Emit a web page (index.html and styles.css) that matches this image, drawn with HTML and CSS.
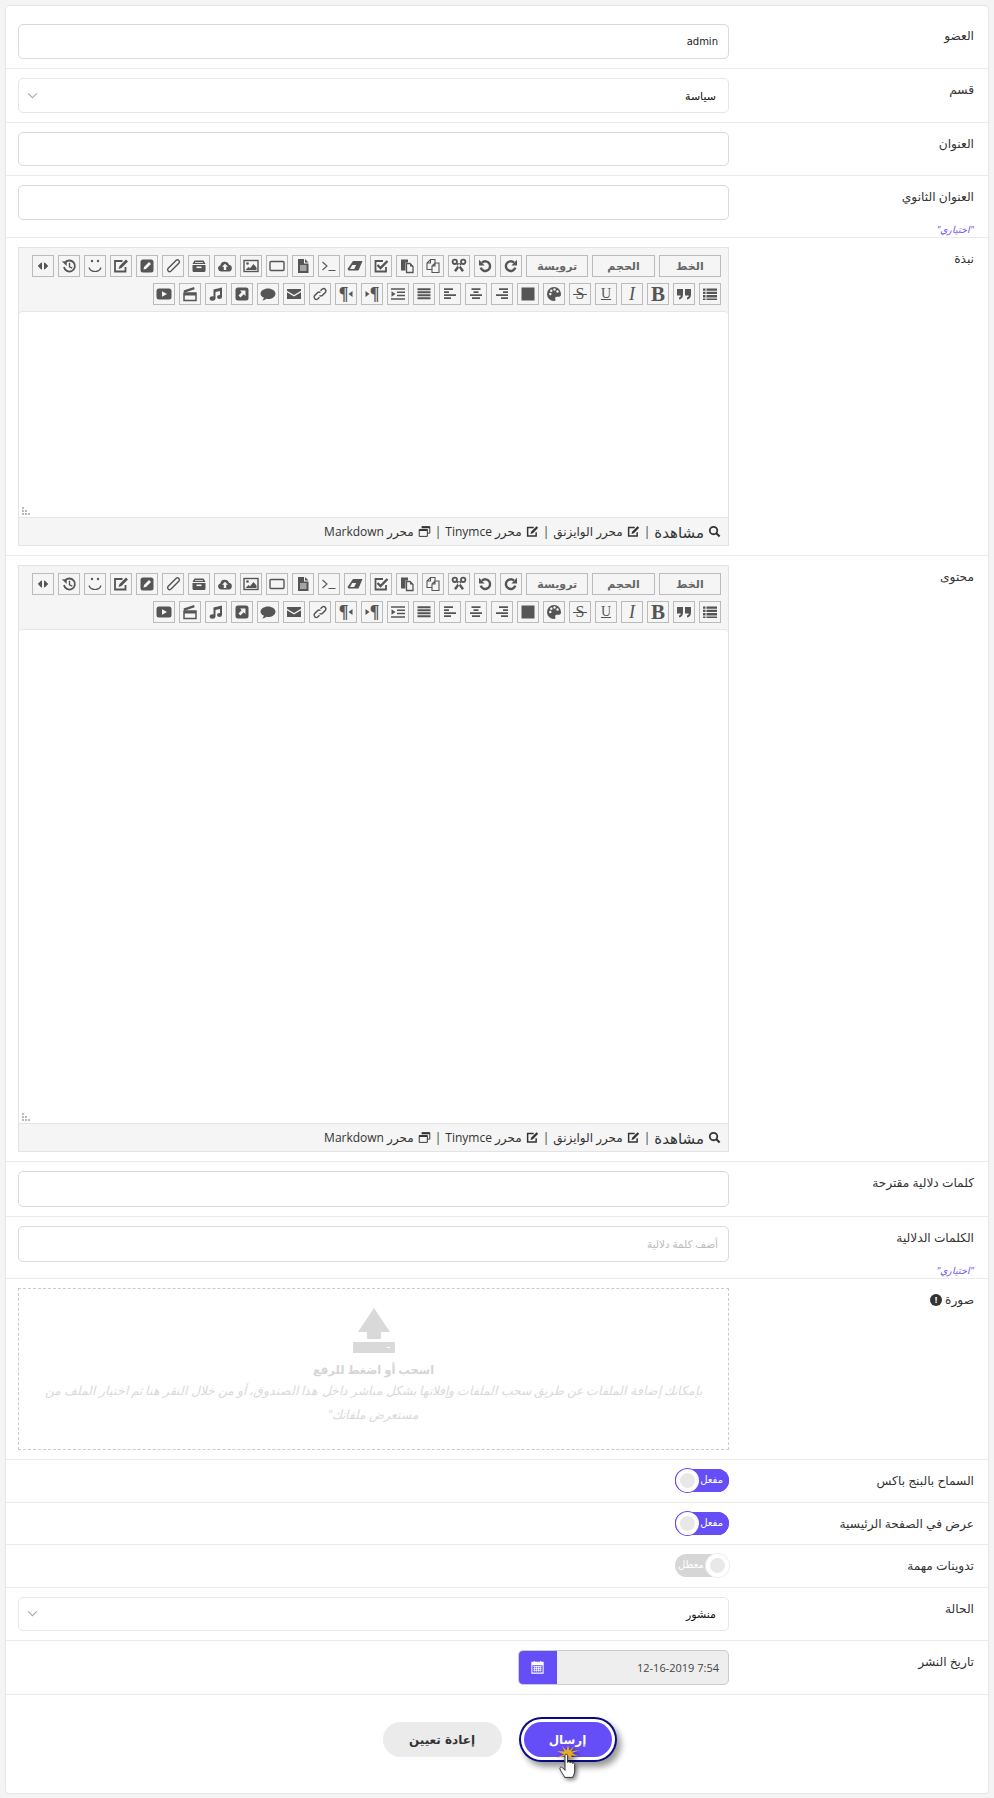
FILE: index.html
```html
<!DOCTYPE html>
<html lang="ar" dir="rtl">
<head>
<meta charset="utf-8">
<title>إضافة تدوينة</title>
<link rel="stylesheet" href="styles.css">
</head>
<body>
<svg class="sprite" width="0" height="0">
  <defs>
    <symbol id="i-redo" viewBox="0 0 16 16"><path d="M12.3 9.600A4.800 4.800 0 1 1 11 4.600" fill="none" stroke="currentColor" stroke-width="2.400"/><path d="M14 1.800v5.600H8.400z"/></symbol>
    <symbol id="i-undo" viewBox="0 0 16 16"><path d="M3.700 9.600A4.800 4.800 0 1 0 5 4.600" fill="none" stroke="currentColor" stroke-width="2.400"/><path d="M2 1.800v5.600h5.600z"/></symbol>
    <symbol id="i-cut" viewBox="0 0 16 16"><circle cx="3.800" cy="3.800" r="2.200" fill="none" stroke="currentColor" stroke-width="1.800"/><circle cx="12.200" cy="3.800" r="2.200" fill="none" stroke="currentColor" stroke-width="1.800"/><path d="M5 5.500l6 8.500 2-1.500L7.500 5zM11 5.500L5 14l-2-1.500L8.500 5z"/></symbol>
    <symbol id="i-copy" viewBox="0 0 16 16"><path d="M10 5V1.500H5.500L2 5v6.500h5M5.500 1.500V5H2M10 5h4v9.500H7V8zM10 5v3H7" fill="none" stroke="currentColor" stroke-width="1.100"/></symbol>
    <symbol id="i-paste" viewBox="0 0 16 16"><path d="M2 1.500h7v3H6.500v8H2z"/><path d="M7.500 5.500h3.500l3 3v6H7.500z" fill="none" stroke="currentColor" stroke-width="1.300"/><path d="M11 5.500v3h3z"/></symbol>
    <symbol id="i-check" viewBox="0 0 16 16"><path d="M13 9v4.500H2.500V3H10" fill="none" stroke="currentColor" stroke-width="1.800"/><path d="M4.500 7l3 3 7-7" fill="none" stroke="currentColor" stroke-width="2.400"/></symbol>
    <symbol id="i-eraser" viewBox="0 0 16 16"><path d="M6 3H15.500l-4 9.500H1.500L.5 11z"/><path d="M3 11l2.200-4h4l-2 4z" fill="#f5f5f5"/></symbol>
    <symbol id="i-terminal" viewBox="0 0 16 16"><path d="M1.500 4l4.500 4-4.500 4M7.500 12.500h7" fill="none" stroke="currentColor" stroke-width="1.100"/></symbol>
    <symbol id="i-file" viewBox="0 0 16 16"><path d="M3 1h6v4.500h4.500V15H3z"/><path d="M10 1l3.500 3.500H10z"/><path d="M5 8h6.500M5 10h6.500M5 12h6.500" stroke="#f5f5f5" stroke-width="1"/></symbol>
    <symbol id="i-rect" viewBox="0 0 16 16"><rect x="1" y="3.500" width="14" height="9" rx="1" fill="none" stroke="currentColor" stroke-width="1.400"/></symbol>
    <symbol id="i-image" viewBox="0 0 16 16"><rect x="1" y="2.500" width="14" height="11" fill="none" stroke="currentColor" stroke-width="1.400"/><circle cx="4.500" cy="5.500" r="1.300"/><path d="M2.500 12l3-3 1.500 1.300 3.500-4.300 3 3.500V12z"/></symbol>
    <symbol id="i-cloud" viewBox="0 0 16 16"><path d="M4 13.500A3 3 0 0 1 3.300 7.600 4.500 4.500 0 0 1 12 6.800a3.400 3.400 0 0 1 0 6.700z"/><path d="M8 5.800l3 3H9.200V12H6.800V8.800H5z" fill="#f5f5f5"/></symbol>
    <symbol id="i-archive" viewBox="0 0 16 16"><path d="M3.500 2.500h9l2 3.500h-13z"/><path d="M1.500 7h13v5.500a1.500 1.500 0 0 1-1.500 1.500H3a1.500 1.500 0 0 1-1.500-1.500z"/><path d="M5.500 8.500h5v1.600h-5z" fill="#f5f5f5"/><path d="M4 4.500h8" stroke="#f5f5f5" stroke-width=".8"/></symbol>
    <symbol id="i-clip" viewBox="0 0 16 16"><path d="M11.500 2L3 10.500a2 2 0 0 0 2.800 2.800L14 5A2 2 0 0 0 11.200 2.200L5 8.500" fill="none" stroke="currentColor" stroke-width="1.400"/></symbol>
    <symbol id="i-pen-square" viewBox="0 0 16 16"><rect x="1.500" y="1.500" width="13" height="13" rx="2.500"/><path d="M10 4l2 2-5 5-2.500.5.500-2.500z" fill="#f5f5f5"/></symbol>
    <symbol id="i-edit-o" viewBox="0 0 16 16"><path d="M12.500 9v4.500H2V3h7.500" fill="none" stroke="currentColor" stroke-width="1.800"/><path d="M13 1.500l2 2-6.500 6.500-3 1 1-3z"/></symbol>
    <symbol id="i-smile" viewBox="0 0 16 16"><circle cx="5" cy="3" r="1.200"/><circle cx="11" cy="3" r="1.200"/><path d="M2 9.500c1 3 3.500 4 6 4s5-1 6-4" fill="none" stroke="currentColor" stroke-width="1.200"/></symbol>
    <symbol id="i-history" viewBox="0 0 16 16"><path d="M3.800 5A5.500 5.500 0 1 1 3 9" fill="none" stroke="currentColor" stroke-width="1.800"/><path d="M.8 3.200l5 .3-.2 4.600z"/><path d="M8.500 4.800v4l2.800 1.400" fill="none" stroke="currentColor" stroke-width="1.400"/></symbol>
    <symbol id="i-code" viewBox="0 0 16 16"><path d="M6.500 4.800L3.300 8l3.200 3.200zM9.500 4.800L12.700 8l-3.200 3.200z" stroke="currentColor" stroke-width="1"/></symbol>
    <symbol id="i-list" viewBox="0 0 16 16"><path d="M1 2.500h2.500v2.300H1zM4.500 2.500H15v2.300H4.500zM1 5.800h2.500v2.300H1zM4.500 5.800H15v2.300H4.500zM1 9.100h2.500v2.300H1zM4.500 9.100H15v2.300H4.500zM1 12.400h2.500v1.600H1zM4.500 12.400H15V14H4.500z"/></symbol>
    <symbol id="i-quote" viewBox="0 0 16 16"><path d="M1 3h6v5.500C7 11.500 5.500 13 3 13.500v-2c1 0 1.700-.8 1.700-2H1zM9 3h6v5.500c0 3-1.500 4.500-4 5v-2c1 0 1.700-.8 1.700-2H9z"/></symbol>
    <symbol id="i-palette" viewBox="0 0 16 16"><path d="M8 1a7 7 0 1 0 0 14c1.300 0 1.800-1 1.300-2-.6-1.200.2-2.300 1.600-2.300H13c1.300 0 2-.9 2-2.200C15 4 12 1 8 1z"/><g fill="#f5f5f5"><circle cx="4.300" cy="8" r="1.200"/><circle cx="5.300" cy="4.800" r="1.200"/><circle cx="8.500" cy="3.500" r="1.200"/><circle cx="11.500" cy="5.500" r="1.200"/></g></symbol>
    <symbol id="i-square" viewBox="0 0 16 16"><rect x="1.500" y="1.500" width="13" height="13"/></symbol>
    <symbol id="i-aright" viewBox="0 0 16 16"><path d="M5 3.200h9M9 6.200h5M2 9.200h12M7 12.200h7" stroke="currentColor" stroke-width="1.700"/></symbol>
    <symbol id="i-acenter" viewBox="0 0 16 16"><path d="M3.500 3.200h9M5.500 6.200h5M2 9.200h12M4 12.200h8" stroke="currentColor" stroke-width="1.700"/></symbol>
    <symbol id="i-aleft" viewBox="0 0 16 16"><path d="M2 3.200h9M2 6.200h5M2 9.200h12M2 12.200h7" stroke="currentColor" stroke-width="1.700"/></symbol>
    <symbol id="i-justify" viewBox="0 0 16 16"><path d="M1.500 3.200h13M1.500 6.200h13M1.500 9.200h13M1.500 12.200h13" stroke="currentColor" stroke-width="1.900"/></symbol>
    <symbol id="i-indent" viewBox="0 0 16 16"><path d="M1 3h14M7 6.300h8M7 9.600h8M1 13h14" stroke="currentColor" stroke-width="1.500"/><path d="M5.500 8L1.500 5.300v5.400z"/></symbol>
    <symbol id="i-pil" viewBox="0 0 5 10"><path d="M4.500 2L.5 5l4 3z"/></symbol>
    <symbol id="i-pir" viewBox="0 0 5 10"><path d="M.5 2l4 3-4 3z"/></symbol>
    <symbol id="i-chain" viewBox="0 0 16 16"><path d="M7.500 9.500a2.400 2.400 0 0 0 3 -.2L13.500 6.200a2.300 2.300 0 0 0-3.200-3.200L8.500 4.800M8.500 6.500a2.400 2.400 0 0 0-3 .2L2.500 9.800a2.300 2.300 0 0 0 3.200 3.200L7.500 11.200" fill="none" stroke="currentColor" stroke-width="1.500"/></symbol>
    <symbol id="i-mail" viewBox="0 0 16 16"><path d="M1 3h14v1.800L8 9 1 4.800z"/><path d="M1 6.300L8 10.500l7-4.200V13H1z"/></symbol>
    <symbol id="i-comment" viewBox="0 0 16 16"><path d="M8 2.500c4 0 7.500 2.300 7.500 5.200S12 13 8 13c-.6 0-1.200 0-1.800-.2-1 1-2.300 1.600-4 1.700 1-.9 1.500-1.800 1.600-2.900C2 10.700.5 9.300.5 7.700.5 4.800 4 2.500 8 2.500z"/></symbol>
    <symbol id="i-extlink" viewBox="0 0 16 16"><rect x="1.500" y="1.500" width="13" height="13" rx="2.500"/><path d="M6 4.500h5.500V10L9.700 8.300 6.500 11.500 4.500 9.500 7.700 6.300z" fill="#f5f5f5"/></symbol>
    <symbol id="i-music" viewBox="0 0 16 16"><path d="M5.500 3.500L14 1.500v9.500h-2V5L7.500 6v6.500h-2z"/><ellipse cx="4.500" cy="12.500" rx="2.800" ry="2.200"/><ellipse cx="11.500" cy="11" rx="2.500" ry="2.100"/></symbol>
    <symbol id="i-clap" viewBox="0 0 16 16"><path d="M2 7h12v7.500H2z" fill="none" stroke="currentColor" stroke-width="1.500"/><path d="M2 9.500h12V7H2z"/><path d="M1.500 4.500L12 1l.7 2.200L2.300 6.800z"/></symbol>
    <symbol id="i-play" viewBox="0 0 16 16"><rect x=".5" y="2.500" width="15" height="11" rx="2.500"/><path d="M6 5.300L11 8l-5 2.700z" fill="#f5f5f5"/></symbol>
    <symbol id="i-search" viewBox="0 0 16 16"><circle cx="6.800" cy="6.800" r="4.600" fill="none" stroke="currentColor" stroke-width="2.200"/><path d="M10.300 10.300l4 4" stroke="currentColor" stroke-width="2.600"/></symbol>
    <symbol id="i-window" viewBox="0 0 16 16"><path d="M4.500 2h10v8H12M1.500 5.500h10v8.500h-10z" fill="none" stroke="currentColor" stroke-width="1.200"/><path d="M4.500 2h10v2h-10zM1.500 5.500h10v2h-10z"/></symbol>
    <symbol id="i-chevron" viewBox="0 0 12 8"><path d="M1 1.500l5 5 5-5" fill="none" stroke="currentColor" stroke-width="1.200"/></symbol>
    <symbol id="i-calendar" viewBox="0 0 16 16"><path d="M2 2.500h12V14H2z" fill="none" stroke="currentColor" stroke-width="1.100"/><path d="M2 2.500h12V5.500H2zM4 1h1.200v2.500H4zM10.800 1H12v2.500h-1.200z"/><path d="M3.500 7h9M3.500 9h9M3.500 11h9M5 6.500v6M7 6.500v6M9 6.500v6M11 6.500v6" stroke="currentColor" stroke-width=".8"/></symbol>
  </defs>
</svg>

<form class="card">
  <div class="row">
    <label class="row-label">العضو</label>
    <div class="row-field"><div class="input admin">admin</div></div>
  </div>
  <div class="row">
    <label class="row-label">قسم</label>
    <div class="row-field">
      <div class="input select"><span>سياسة</span><svg class="chevron"><use href="#i-chevron"/></svg></div>
    </div>
  </div>
  <div class="row">
    <label class="row-label">العنوان</label>
    <div class="row-field"><div class="input"></div></div>
  </div>
  <div class="row row-optional">
    <div class="row-label">
      <label>العنوان الثانوي</label>
      <small class="optional">"اختياري"</small>
    </div>
    <div class="row-field"><div class="input"></div></div>
  </div>

  <div class="row">
    <label class="row-label">نبذة</label>
    <div class="row-field">
      <div class="editor">
        <div class="toolbar">
          <div class="tool-row">
            <button type="button" class="tool tool-wide">الخط</button>
            <button type="button" class="tool tool-wide">الحجم</button>
            <button type="button" class="tool tool-wide">ترويسة</button>
            <button type="button" class="tool"><svg><use href="#i-redo"/></svg></button>
            <button type="button" class="tool"><svg><use href="#i-undo"/></svg></button>
            <button type="button" class="tool"><svg><use href="#i-cut"/></svg></button>
            <button type="button" class="tool"><svg><use href="#i-copy"/></svg></button>
            <button type="button" class="tool"><svg><use href="#i-paste"/></svg></button>
            <button type="button" class="tool"><svg><use href="#i-check"/></svg></button>
            <button type="button" class="tool"><svg><use href="#i-eraser"/></svg></button>
            <button type="button" class="tool"><svg><use href="#i-terminal"/></svg></button>
            <button type="button" class="tool"><svg><use href="#i-file"/></svg></button>
            <button type="button" class="tool"><svg><use href="#i-rect"/></svg></button>
            <button type="button" class="tool"><svg><use href="#i-image"/></svg></button>
            <button type="button" class="tool"><svg><use href="#i-cloud"/></svg></button>
            <button type="button" class="tool"><svg><use href="#i-archive"/></svg></button>
            <button type="button" class="tool"><svg><use href="#i-clip"/></svg></button>
            <button type="button" class="tool"><svg><use href="#i-pen-square"/></svg></button>
            <button type="button" class="tool"><svg><use href="#i-edit-o"/></svg></button>
            <button type="button" class="tool"><svg><use href="#i-smile"/></svg></button>
            <button type="button" class="tool"><svg><use href="#i-history"/></svg></button>
            <button type="button" class="tool"><svg><use href="#i-code"/></svg></button>
          </div>
          <div class="tool-row">
            <button type="button" class="tool"><svg><use href="#i-list"/></svg></button>
            <button type="button" class="tool"><svg><use href="#i-quote"/></svg></button>
            <button type="button" class="tool tool-b">B</button>
            <button type="button" class="tool tool-i">I</button>
            <button type="button" class="tool tool-u">U</button>
            <button type="button" class="tool tool-s">S</button>
            <button type="button" class="tool"><svg><use href="#i-palette"/></svg></button>
            <button type="button" class="tool"><svg><use href="#i-square"/></svg></button>
            <button type="button" class="tool"><svg><use href="#i-aright"/></svg></button>
            <button type="button" class="tool"><svg><use href="#i-acenter"/></svg></button>
            <button type="button" class="tool"><svg><use href="#i-aleft"/></svg></button>
            <button type="button" class="tool"><svg><use href="#i-justify"/></svg></button>
            <button type="button" class="tool"><svg><use href="#i-indent"/></svg></button>
            <button type="button" class="tool tool-p"><span>¶</span><svg><use href="#i-pir"/></svg></button>
            <button type="button" class="tool tool-p"><svg><use href="#i-pil"/></svg><span>¶</span></button>
            <button type="button" class="tool"><svg><use href="#i-chain"/></svg></button>
            <button type="button" class="tool"><svg><use href="#i-mail"/></svg></button>
            <button type="button" class="tool"><svg><use href="#i-comment"/></svg></button>
            <button type="button" class="tool"><svg><use href="#i-extlink"/></svg></button>
            <button type="button" class="tool"><svg><use href="#i-music"/></svg></button>
            <button type="button" class="tool"><svg><use href="#i-clap"/></svg></button>
            <button type="button" class="tool"><svg><use href="#i-play"/></svg></button>
          </div>
        </div>
        <div class="editor-body editor-short"><span class="grip"></span></div>
        <div class="editor-foot">
          <svg><use href="#i-search"/></svg><span class="foot-view">مشاهدة</span><span>|</span>
          <svg><use href="#i-edit-o"/></svg><span>محرر الوايزنق</span><span>|</span>
          <svg><use href="#i-edit-o"/></svg><span>محرر Tinymce</span><span>|</span>
          <svg><use href="#i-window"/></svg><span>محرر Markdown</span>
        </div>
      </div>
    </div>
  </div>

  <div class="row">
    <label class="row-label">محتوى</label>
    <div class="row-field">
      <div class="editor">
        <div class="toolbar">
          <div class="tool-row">
            <button type="button" class="tool tool-wide">الخط</button>
            <button type="button" class="tool tool-wide">الحجم</button>
            <button type="button" class="tool tool-wide">ترويسة</button>
            <button type="button" class="tool"><svg><use href="#i-redo"/></svg></button>
            <button type="button" class="tool"><svg><use href="#i-undo"/></svg></button>
            <button type="button" class="tool"><svg><use href="#i-cut"/></svg></button>
            <button type="button" class="tool"><svg><use href="#i-copy"/></svg></button>
            <button type="button" class="tool"><svg><use href="#i-paste"/></svg></button>
            <button type="button" class="tool"><svg><use href="#i-check"/></svg></button>
            <button type="button" class="tool"><svg><use href="#i-eraser"/></svg></button>
            <button type="button" class="tool"><svg><use href="#i-terminal"/></svg></button>
            <button type="button" class="tool"><svg><use href="#i-file"/></svg></button>
            <button type="button" class="tool"><svg><use href="#i-rect"/></svg></button>
            <button type="button" class="tool"><svg><use href="#i-image"/></svg></button>
            <button type="button" class="tool"><svg><use href="#i-cloud"/></svg></button>
            <button type="button" class="tool"><svg><use href="#i-archive"/></svg></button>
            <button type="button" class="tool"><svg><use href="#i-clip"/></svg></button>
            <button type="button" class="tool"><svg><use href="#i-pen-square"/></svg></button>
            <button type="button" class="tool"><svg><use href="#i-edit-o"/></svg></button>
            <button type="button" class="tool"><svg><use href="#i-smile"/></svg></button>
            <button type="button" class="tool"><svg><use href="#i-history"/></svg></button>
            <button type="button" class="tool"><svg><use href="#i-code"/></svg></button>
          </div>
          <div class="tool-row">
            <button type="button" class="tool"><svg><use href="#i-list"/></svg></button>
            <button type="button" class="tool"><svg><use href="#i-quote"/></svg></button>
            <button type="button" class="tool tool-b">B</button>
            <button type="button" class="tool tool-i">I</button>
            <button type="button" class="tool tool-u">U</button>
            <button type="button" class="tool tool-s">S</button>
            <button type="button" class="tool"><svg><use href="#i-palette"/></svg></button>
            <button type="button" class="tool"><svg><use href="#i-square"/></svg></button>
            <button type="button" class="tool"><svg><use href="#i-aright"/></svg></button>
            <button type="button" class="tool"><svg><use href="#i-acenter"/></svg></button>
            <button type="button" class="tool"><svg><use href="#i-aleft"/></svg></button>
            <button type="button" class="tool"><svg><use href="#i-justify"/></svg></button>
            <button type="button" class="tool"><svg><use href="#i-indent"/></svg></button>
            <button type="button" class="tool tool-p"><span>¶</span><svg><use href="#i-pir"/></svg></button>
            <button type="button" class="tool tool-p"><svg><use href="#i-pil"/></svg><span>¶</span></button>
            <button type="button" class="tool"><svg><use href="#i-chain"/></svg></button>
            <button type="button" class="tool"><svg><use href="#i-mail"/></svg></button>
            <button type="button" class="tool"><svg><use href="#i-comment"/></svg></button>
            <button type="button" class="tool"><svg><use href="#i-extlink"/></svg></button>
            <button type="button" class="tool"><svg><use href="#i-music"/></svg></button>
            <button type="button" class="tool"><svg><use href="#i-clap"/></svg></button>
            <button type="button" class="tool"><svg><use href="#i-play"/></svg></button>
          </div>
        </div>
        <div class="editor-body editor-tall"><span class="grip"></span></div>
        <div class="editor-foot">
          <svg><use href="#i-search"/></svg><span class="foot-view">مشاهدة</span><span>|</span>
          <svg><use href="#i-edit-o"/></svg><span>محرر الوايزنق</span><span>|</span>
          <svg><use href="#i-edit-o"/></svg><span>محرر Tinymce</span><span>|</span>
          <svg><use href="#i-window"/></svg><span>محرر Markdown</span>
        </div>
      </div>
    </div>
  </div>

  <div class="row">
    <label class="row-label">كلمات دلالية مقترحة</label>
    <div class="row-field"><div class="input input-tall"></div></div>
  </div>
  <div class="row row-optional">
    <div class="row-label">
      <label>الكلمات الدلالية</label>
      <small class="optional">"اختياري"</small>
    </div>
    <div class="row-field"><div class="input input-tall placeholder">أضف كلمة دلالية</div></div>
  </div>

  <div class="row">
    <div class="row-label label-note"><label>صورة</label><span class="note-dot">!</span></div>
    <div class="row-field">
      <div class="dropzone">
        <svg class="drop-icon" viewBox="0 0 42 45"><path d="M21 0l16 24h-9v6a1 1 0 0 1-1 1H15a1 1 0 0 1-1-1v-6H5z"/><path d="M0 34h42v11H0z"/><path d="M34 39h3v1h-3z" fill="#fff"/></svg>
        <strong class="drop-title">اسحب أو اضغط للرفع</strong>
        <em class="drop-text">بإمكانك إضافة الملفات عن طريق سحب الملفات وإفلاتها بشكل مباشر داخل هذا الصندوق، أو من خلال النقر هنا ثم اختيار الملف من مستعرض ملفاتك"</em>
      </div>
    </div>
  </div>

  <div class="row row-switch">
    <label class="row-label">السماح بالبنج باكس</label>
    <div class="row-field"><span class="switch switch-on"><i></i><b>مفعل</b></span></div>
  </div>
  <div class="row row-switch">
    <label class="row-label">عرض في الصفحة الرئيسية</label>
    <div class="row-field"><span class="switch switch-on"><i></i><b>مفعل</b></span></div>
  </div>
  <div class="row row-switch">
    <label class="row-label">تدوينات مهمة</label>
    <div class="row-field"><span class="switch switch-off"><i></i><b>معطل</b></span></div>
  </div>

  <div class="row">
    <label class="row-label">الحالة</label>
    <div class="row-field">
      <div class="input select"><span>منشور</span><svg class="chevron"><use href="#i-chevron"/></svg></div>
    </div>
  </div>
  <div class="row">
    <label class="row-label">تاريخ النشر</label>
    <div class="row-field">
      <div class="date">
        <span class="date-value"><bdi>12-16-2019 7:54</bdi></span>
        <span class="date-btn"><svg><use href="#i-calendar"/></svg></span>
      </div>
    </div>
  </div>

  <div class="actions">
    <button type="button" class="btn btn-submit">إرسال
      <svg class="pointer" viewBox="0 0 24 33">
        <path d="M12 0l1.500 5.500L18 1l-3 5.500L24 5l-8 3 6 3-7-.5 2 4.500-5-3.500L8 17l1-6-9 2 8-3.500L1 6l7.500.5L6 1l4.500 4.500z" fill="#e6ad24"/>
        <path d="M9 10.500c0-1.800 2.600-1.800 2.600 0v7c.4-1.400 2.400-1 2.500.3.400-1.200 2.400-.9 2.400.6.600-.8 2.200-.4 2.200 1v6.600c0 2.500-1.300 4-2 6.400h-8c-.6-2-4-5.800-4.800-8.600-.3-1.800 1.600-2.400 2.800-1l2.300 2.500z" fill="#fff" stroke="#222" stroke-width=".9"/>
      </svg>
    </button>
    <button type="button" class="btn btn-reset">إعادة تعيين</button>
  </div>
</form>
</body>
</html>
```

FILE: styles.css
```css
* {
	box-sizing: border-box;
}
body {
	margin: 0;
	padding: 5px 5px 6px;
	background: #f4f4f4;
	font-family: "Open Sans", "DejaVu Sans", sans-serif;
	font-size: 12px;
	color: #333;
}
.sprite {
	position: absolute;
}

.card {
	background: #fff;
	border: 1px solid #e6e6e6;
	border-radius: 4px;
	padding-top: 9px;
}
.row {
	display: flex;
	justify-content: space-between;
	padding: 9px 14px 9px 12px;
	border-bottom: 1px solid #ebebeb;
}
.row-optional {
	padding-bottom: 0;
}
.row-switch {
	height: 42.4px;
}
.row-label {
	width: 240px;
	padding-top: 3px;
	font-size: 12.2px;
	line-height: 18px;
	color: #333;
}
.row-field {
	width: 711px;
}
.optional {
	display: block;
	margin-top: 17px;
	font-size: 9.5px;
	line-height: 14px;
	font-style: italic;
	color: #6a50f5;
}
.label-note {
	display: flex;
	align-items: flex-start;
	gap: 3px;
}
.note-dot {
	width: 12px;
	height: 12px;
	margin-top: 3px;
	border-radius: 50%;
	background: #333;
	color: #fff;
	font-size: 9px;
	font-weight: bold;
	line-height: 12px;
	text-align: center;
}

.input {
	display: flex;
	align-items: center;
	justify-content: space-between;
	height: 34.8px;
	padding: 0 10px;
	background: #fff;
	border: 1px solid #d9d9d9;
	border-radius: 5px;
	font-size: 11px;
	color: #222;
}
.input-tall {
	height: 36px;
}
.admin {
	font-family: "DejaVu Sans", sans-serif;
	font-size: 10px;
}
.select {
	border-color: #e6e6e6;
	padding: 0 12px 0 8px;
	color: #111;
}
.chevron {
	width: 11px;
	height: 7px;
	color: #aaa;
}
.placeholder {
	color: #bdbdbd;
	font-size: 10.5px;
}

.editor {
	background: #f5f5f5;
	border: 1px solid #e3e3e3;
}
.toolbar {
	padding: 7px 7px 6px;
}
.tool-row {
	display: flex;
	gap: 4px;
}
.tool-row + .tool-row {
	margin-top: 6px;
}
.tool {
	position: relative;
	display: flex;
	align-items: center;
	justify-content: center;
	width: 22px;
	height: 22px;
	padding: 0;
	background: #f5f5f5;
	border: 1px solid #bbb;
	color: #555;
	fill: currentColor;
	font-family: "Liberation Serif", serif;
}
.tool svg {
	width: 16px;
	height: 16px;
}
.tool-wide {
	width: 62.3px;
	font-family: "DejaVu Sans", sans-serif;
	font-size: 11px;
	font-weight: bold;
	color: #666;
}
.tool-b {
	font-size: 21px;
	font-weight: bold;
}
.tool-i {
	font-size: 18px;
	font-style: italic;
}
.tool-u {
	font-size: 14px;
	text-decoration: underline;
}
.tool-s {
	font-size: 16px;
}
.tool-s::after {
	content: "";
	position: absolute;
	top: 10px;
	left: 3px;
	right: 3px;
	height: 1px;
	background: #555;
}
.tool-p {
	font-size: 18px;
	font-weight: bold;
}
.tool-p svg {
	width: 5px;
	height: 10px;
	flex: none;
}
.editor-body {
	position: relative;
	background: #fff;
	border-top: 1px solid #e5e5e5;
	border-radius: 4px 4px 0 0;
}
.editor-short {
	height: 206px;
}
.editor-tall {
	height: 494px;
}
.grip {
	position: absolute;
	left: 3px;
	bottom: 2px;
	width: 2px;
	height: 2px;
	background: #bbb;
	box-shadow: 3px 0 #bbb, 6px 0 #bbb, 0 -3px #bbb, 3px -3px #bbb, 0 -6px #bbb;
}
.editor-foot {
	display: flex;
	align-items: center;
	gap: 4px;
	height: 28px;
	padding: 0 7px;
	background: #f5f5f5;
	border-top: 1px solid #e5e5e5;
	font-size: 12px;
	color: #333;
	fill: #333;
}
.editor-foot svg {
	width: 13px;
	height: 13px;
	color: #333;
}
.foot-view {
	font-size: 15px;
}

.dropzone {
	display: flex;
	flex-direction: column;
	align-items: center;
	height: 162px;
	padding: 19px 20px 0;
	border: 1px dashed #ccc;
	text-align: center;
}
.drop-icon {
	width: 42px;
	height: 45px;
	fill: #d9d9d9;
}
.drop-title {
	margin-top: 8px;
	font-size: 11.5px;
	line-height: 18px;
	color: #d5d5d5;
}
.drop-text {
	font-size: 12.4px;
	line-height: 24px;
	color: #dadada;
}

.switch {
	position: relative;
	display: block;
	width: 54px;
	height: 23px;
	border-radius: 12px;
}
.switch i {
	position: absolute;
	top: 0;
	width: 23px;
	height: 23px;
	border: 4px solid #fff;
	border-radius: 50%;
	background: #e8e8e8;
}
.switch b {
	position: absolute;
	top: 0;
	font-size: 10px;
	font-weight: normal;
	line-height: 20px;
	color: #fff;
}
.switch-on {
	background: #654ef8;
	box-shadow: inset 0 0 0 1px #654ef8;
}
.switch-on i {
	left: 1px;
	box-shadow: 0 0 0 1px #654ef8;
}
.switch-on b {
	right: 6px;
}
.switch-off {
	background: #d6d6d6;
}
.switch-off i {
	right: 0;
	box-shadow: 0 0 0 1px #eee;
}
.switch-off b {
	left: 3px;
}

.date {
	display: flex;
	width: 211px;
	height: 35px;
	margin-left: 500px;
	background: #eee;
	border: 1px solid #ccc;
	border-radius: 5px;
	overflow: hidden;
}
.date-value {
	flex: 1;
	padding: 0 9px;
	line-height: 33px;
	font-size: 11px;
	color: #444;
}
.date-btn {
	display: flex;
	align-items: center;
	justify-content: center;
	width: 39px;
	margin: -1px 0 -1px -1px;
	background: #654ef8;
	color: #fff;
	fill: #fff;
}
.date-btn svg {
	width: 15px;
	height: 15px;
}

.actions {
	display: flex;
	justify-content: center;
	gap: 22px;
	padding: 27px 0 36px;
}
.btn {
	height: 35px;
	border: 0;
	border-radius: 18px;
	font-family: "DejaVu Sans", sans-serif;
	font-size: 12px;
	font-weight: bold;
}
.btn-submit {
	position: relative;
	width: 88px;
	background: #654ef8;
	color: #fff;
	box-shadow: 0 0 0 3px #fff, 0 0 0 5px #0b0a80, 4px 5px 6px 5px rgba(0, 0, 0, .4);
}
.btn-reset {
	width: 119px;
	background: #ebebeb;
	color: #333;
}
.pointer {
	position: absolute;
	top: 23px;
	left: 32px;
	width: 24px;
	height: 33px;
	filter: drop-shadow(2px 2px 2px rgba(0, 0, 0, .5));
}
```
